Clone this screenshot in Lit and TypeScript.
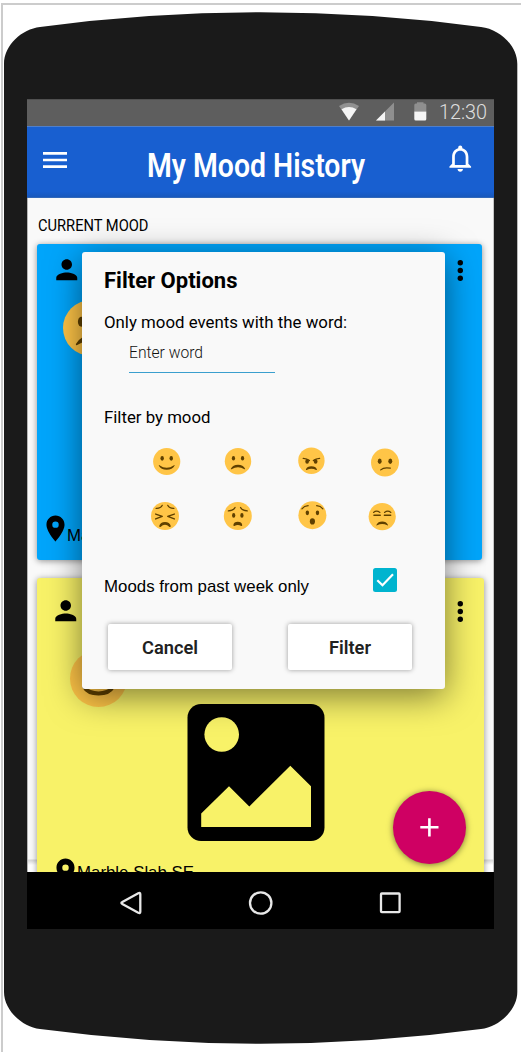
import { LitElement, html, svg, css } from "lit";
import { customElement, state } from "lit/decorators.js";

// Single line of text whose box ends on the baseline.
const label = (text: string, width: number, cls: string) => html`
  <svg class="label ${cls}" width=${width} height="20">
    <text x="0" y="20" textLength=${width} lengthAdjust="spacingAndGlyphs">${text}</text>
  </svg>`;

const person = html`<svg class="person" viewBox="0 0 24 24"><path d="M12 12c2.21 0 4-1.79 4-4s-1.79-4-4-4-4 1.79-4 4 1.79 4 4 4zm0 2c-2.67 0-8 1.34-8 4v2h16v-2c0-2.66-5.33-4-8-4z"/></svg>`;
const more = html`<svg class="more" width="6" height="22"><circle cx="3.3" cy="2.7" r="2.7"/><circle cx="3.3" cy="10.5" r="2.7"/><circle cx="3.3" cy="18.3" r="2.7"/></svg>`;
const pin = html`<svg class="pin" viewBox="0 0 24 24"><path d="M12 2C8.13 2 5 5.13 5 9c0 5.25 7 13 7 13s7-7.75 7-13c0-3.87-3.13-7-7-7zm0 9.500a2.500 2.500 0 1 1 0-5 2.500 2.500 0 0 1 0 5z"/></svg>`;

const line = (d: string, w = 1.9) =>
  svg`<path d=${d} fill="none" stroke="#5f4000" stroke-width=${w} stroke-linecap="round" stroke-linejoin="round"/>`;
const fill = (d: string) => svg`<path d=${d} fill="#5f4000"/>`;
const eyes = (lx: number, rx: number, y: number, w = 2.3, h = 3.1) =>
  svg`<ellipse cx=${lx} cy=${y} rx=${w} ry=${h} fill="#5f4000"/><ellipse cx=${rx} cy=${y} rx=${w} ry=${h} fill="#5f4000"/>`;

const faces: Record<string, unknown> = {
  smile: svg`${eyes(12, 24, 13.8)}${fill("M8.300 22.800q9.700 6.800 19.400 0q1-.3.700.7Q25.500 28.800 18 28.800T7.600 23.500q-.3-1 .7-.7z")}`,
  frown: svg`${eyes(11.800, 24.200, 14, 2.2, 3.2)}${fill("M8.300 28.300Q11 23 18 23t9.700 5.300q.2 1-.8.700Q18 23.500 9.100 29q-1 .3-.8-.7z")}`,
  angry: svg`${eyes(12.200, 23.800, 19, 2.5, 3.2)}${line("M6.800 14.800Q12 15 15.300 17.800", 1.8)}${line("M29.200 14.800Q24 15 20.700 17.800", 1.8)}${fill("M10.500 30Q12 25.600 18 25.600T25.500 30q0 1-1 .6Q18 27.200 11.500 30.600q-1 .4-1-.6z")}`,
  confused: svg`${eyes(11.200, 24.800, 16.300, 2.5, 3.5)}${line("M12.500 27.300Q16.500 23.600 24.800 25.200", 1.6)}`,
  persevere: svg`${line("M6.500 8.200Q12.500 8.500 14.500 4.300", 1.6)}${line("M29.500 8.200Q23.500 8.500 21.500 4.300", 1.6)}${line("M6 15.500L14.500 18.500L6 21.800M30 15.500L21.500 18.500L30 21.800", 1.8)}${fill("M10.600 31Q12 25.600 18 25.600T25.400 31q0 1.500-1.600 1-3-2.800-5.800-2.800T12.200 32q-1.600.5-1.600-1z")}`,
  worried: svg`${eyes(12.700, 23.300, 17.300, 2.1, 3)}${line("M5.800 11.500Q12.500 11 14.500 7", 1.6)}${line("M30.200 11.500Q23.500 11 21.500 7", 1.6)}${fill("M12.300 29.500Q13 25.500 18 25.500T23.700 29.500q.1 1.500-1.300 1.200Q18 28.300 13.600 30.700q-1.400.3-1.300-1.200z")}`,
  hushed: svg`${eyes(11.500, 24.500, 15, 2.2, 3.1)}${line("M4.500 9.800Q7.500 6.200 12.500 5.800", 1.6)}${line("M31.500 9.800Q28.500 6.200 23.500 5.800", 1.6)}<ellipse cx="18" cy="26" rx="3.3" ry="4" fill="#5f4000"/>`,
  unamused: svg`${line("M6.500 12.500Q10.500 9.200 15 12.500M21 12.500Q25.500 9.200 29.500 12.500", 1.5)}${line("M7 16.200H15.500M20.800 16.200H29.300", 1.7)}${fill("M11.600 16h4a2.300 2.300 0 0 1-4.200 0zM25.400 16h4a2.300 2.300 0 0 1-4.200 0z")}${fill("M10.300 29Q12.500 24.500 18 24.500T25.700 29q.1 1-1 .6Q18 26 11.300 29.600q-1.100.4-1-.6z")}`,
};

const face = (name: string) => svg`<circle cx="18" cy="18" r="18" fill="#ffc547"/>${faces[name]}`;

@customElement("app-root")
export class AppRoot extends LitElement {
  @state() private pastWeek = true;

  private moods = [
    { name: "smile", x: 36.7, y: 26.5, r: 13.6 },
    { name: "frown", x: 35, y: 26.2, r: 13.2 },
    { name: "angry", x: 35.400, y: 25.7, r: 13.2 },
    { name: "confused", x: 36, y: 27.6, r: 14 },
    { name: "persevere", x: 35, y: 27, r: 14 },
    { name: "worried", x: 34.800, y: 27, r: 14 },
    { name: "hushed", x: 36.400, y: 26.200, r: 14 },
    { name: "unamused", x: 33.200, y: 27.6, r: 13.6 },
  ];

  static styles = css`
    :host {
      display: block;
      position: relative;
      box-sizing: border-box;
      width: 521px;
      height: 1052px;
      overflow: hidden;
      background: #fff;
      font-family: Roboto, sans-serif;
    }
    svg { display: block; flex: none; overflow: visible; }
    .device { position: absolute; left: 0; top: 0; }
    .screen {
      position: relative;
      display: flex;
      flex-direction: column;
      width: 467px;
      height: 830px;
      margin: 99px 0 0 27px;
      overflow: hidden;
      background: #fff;
    }
    .status {
      box-sizing: border-box;
      display: flex;
      flex: none;
      height: 27px;
      padding: 3px 0 0 312px;
      background: #5e5e5e;
      border-top: 1px solid #505050;
    }
    .status .label { margin-top: -4px; margin-left: -1px; }
    .bar {
      box-sizing: border-box;
      display: flex;
      flex: none;
      height: 72px;
      padding-left: 16px;
      border-top: 1px solid #4f7fca;
      border-bottom: 1px solid #3168ba;
      background: linear-gradient(#185fd0 92%, #1858bd);
    }
    .menu { margin-top: 25px; }
    .bar .label { margin: 30px 0 0 80px; }
    .bell { width: 32.5px; height: 32.5px; margin: 15.400px 0 0 79px; fill: #fff; }
    .content {
      display: flex;
      flex-direction: column;
      flex: none;
      height: 674px;
      overflow: hidden;
      background: linear-gradient(#f9f9f9 0 661px, #d6d6d6 662px, #fff 667px);
      border-left: 1px solid #b5b5b5;
      border-right: 1px solid #c5c5c5;
      box-sizing: border-box;
    }
    .heading { margin: 13px 0 13px 9.500px; }
    .card {
      box-sizing: border-box;
      flex: none;
      margin-left: 9px;
      border-radius: 3px;
      box-shadow: 0 1px 6px rgba(0, 0, 0, 0.42);
      display: flex;
      flex-direction: column;
    }
    .blue { width: 445.400px; height: 316px; background: #00a5fb; }
    .yellow { width: 447px; height: 330px; margin-top: 17.500px; background: #f8f268; }
    .top { display: flex; justify-content: space-between; }
    .person { width: 31.5px; height: 31.5px; }
    .blue .top { padding: 10.200px 19.400px 0 13.500px; }
    .blue .more { margin-top: 5.600px; }
    .yellow .top { padding: 17.500px 21px 0 12.500px; }
    .yellow .more { margin-top: 6px; }
    .place { display: flex; }
    .pin { width: 31px; height: 31px; }
    .blue .face { margin: 14.800px 0 0 26px; }
    .blue .place { margin: 156.200px 0 0 2.500px; }
    .place .label { margin: 8px 0 0 -3.500px; }
    .yellow .face { margin: 23.500px 0 0 33px; }
    .photo { margin: -3.500px 0 0 150px; }
    .yellow .place { margin: 15.400px 0 0 12.500px; }
    .yellow .place .label { margin-top: 2.200px; }
    .nav {
      display: flex;
      flex: none;
      height: 57px;
      background: #000;
    }
    .label { font-family: Roboto, sans-serif; font-size: 17px; fill: #000; }
    .arial { font-family: "Liberation Sans", Arial, sans-serif; font-size: 17px; }
    .time { font-size: 20px; font-weight: 300; fill: #dedede; }
    .title { font-size: 33.500px; font-weight: 600; fill: #fff; }
    .section { font-size: 17.300px; }
    .h { font-size: 22px; font-weight: 700; }
    .hint { font-size: 16px; font-weight: 300; fill: #111; }
    .action { font-size: 18.500px; font-weight: 600; fill: #212121; }
    .fab {
      position: absolute;
      left: 365.700px;
      top: 691.800px;
      width: 73px;
      height: 73px;
      padding: 0;
      border: 0;
      border-radius: 50%;
      background: #cf0063;
      box-shadow: 0 1px 6px rgba(0, 0, 0, 0.5);
    }
    .dialog {
      position: absolute;
      left: 55px;
      top: 153px;
      box-sizing: border-box;
      display: flex;
      flex-direction: column;
      width: 363px;
      height: 436.700px;
      padding: 15.700px 0 0 22px;
      border-radius: 3px;
      background: #f9f9f9;
      box-shadow: 0 7px 34px rgba(0, 0, 0, 0.5);
    }
    .q { margin-top: 20.300px; }
    .field {
      width: 146.500px;
      margin: 10px 0 0 24.500px;
      padding-bottom: 14px;
      border-bottom: 1px solid #3a9fce;
    }
    .by { margin-top: 29.700px; }
    .moods {
      display: grid;
      grid-template-columns: repeat(4, 73px);
      margin: 12.300px 0 0 26px;
    }
    .week { display: flex; align-items: flex-end; gap: 64px; margin-top: 25px; }
    .buttons { display: flex; gap: 56px; margin: 32px 0 0 4px; }
    button { font: inherit; }
    .btn {
      display: flex;
      box-sizing: border-box;
      justify-content: center;
      width: 124px;
      height: 46.500px;
      padding: 10px 0 0;
      border: 0;
      border-radius: 2px;
      background: #fff;
      box-shadow: 0 0 5px rgba(0, 0, 0, 0.38);
    }
  `;

  render() {
    return html`
      <svg class="device" width="521" height="1052">
        <path d="M2 1052V4H521" fill="none" stroke="#ccc" stroke-width="2"/>
        <path d="M4 64C4 45 22 29 40 27Q150 12.300 260.500 12.300T481 27C499 29 517.300 45 517.300 64V992C517.300 1010 499 1027 481 1029Q371 1043.700 260.500 1043.700T40 1029C22 1027 4 1010 4 992Z" fill="#1a1a1a"/>
      </svg>
      <div class="screen">
        <div class="status">
          <svg width="101" height="20">
            <path d="M0 3Q10-3.500 20 3L10 17.500Z" fill="#919191"/>
            <path d="M2.500 6.200Q10 1.800 17.500 6.200L10 17.500Z" fill="#f5f5f5"/>
            <path d="M37 17.500L55-.5V17.500Z" fill="#8f8f8f"/>
            <path d="M37 17.500L46 8.500V17.500Z" fill="#f5f5f5"/>
            <path d="M75.300 8.500V2q0-1.500 1.500-1.500H78V-.7h6.500V.5h1.300q1.500 0 1.500 1.500V8.500Z" fill="#8f8f8f"/>
            <path d="M75.300 8.500h12v7.500q0 1.500-1.500 1.500h-9q-1.500 0-1.500-1.500Z" fill="#f5f5f5"/>
          </svg>
          ${label("12:30", 48, "time")}
        </div>
        <div class="bar">
          <svg class="menu" width="24" height="16"><path d="M0 1.400H24M0 8H24M0 14.600H24" stroke="#fff" stroke-width="2.600"/></svg>
          ${label("My Mood History", 218, "title")}
          <svg class="bell" viewBox="0 0 24 24"><path d="M12 22c1.100 0 2-.9 2-2h-4c0 1.100.9 2 2 2zm6-6v-5c0-3.070-1.630-5.640-4.500-6.320V4c0-.830-.670-1.500-1.500-1.500s-1.500.670-1.500 1.500v.680C7.640 5.360 6 7.920 6 11v5l-2 2v1h16v-1l-2-2zm-2 1H8v-6c0-2.480 1.510-4.500 4-4.500s4 2.020 4 4.500v6z"/></svg>
        </div>
        <div class="content">
          <div class="heading">${label("CURRENT MOOD", 110.5, "section")}</div>
          <div class="card blue">
            <div class="top">${person}${more}</div>
            <svg class="face" width="56" height="56" viewBox="0 0 36 36">${face("frown")}</svg>
            <div class="place">${pin}${label("Marble Slab SE", 117, "arial")}</div>
          </div>
          <div class="card yellow">
            <div class="top">${person}${more}</div>
            <svg class="face" width="57" height="57" viewBox="0 0 36 36">${face("smile")}</svg>
            <svg class="photo" width="137" height="137">
              <rect x="0.500" width="137" height="137" rx="13.500"/>
              <g fill="#f8f268"><circle cx="34.700" cy="30.500" r="17.300"/><path d="M14.200 123V109.500L42 82.300L62.300 102.500L103.300 61.800L124 82.200V123Z"/></g>
            </svg>
            <div class="place">${pin}${label("Marble Slab SE", 117, "arial")}</div>
          </div>
        </div>
        <div class="nav">
          <svg width="467" height="57" fill="none" stroke="#e8e8e8" stroke-width="2.300" stroke-linejoin="round">
            <path d="M111.300 21.300Q113.300 20.300 113.300 22.300V39.700Q113.300 41.700 111.300 40.700L95.300 31.900Q93.500 31 95.300 30.100Z"/>
            <circle cx="233.700" cy="31" r="10.700"/>
            <rect x="354" y="21.500" width="18.600" height="18.600" rx="0.800"/>
          </svg>
        </div>
        <button class="fab" aria-label="Add">
          <svg width="73" height="73"><path d="M27.300 36.300H45.500M36.400 27.200V45.400" stroke="#fff" stroke-width="2.600"/></svg>
        </button>
        <div class="dialog" role="dialog">
          ${label("Filter Options", 133.5, "h")}
          <div class="q">${label("Only mood events with the word:", 243, "")}</div>
          <div class="field">${label("Enter word", 74, "hint")}</div>
          <div class="by">${label("Filter by mood", 106.5, "")}</div>
          <div class="moods">
            ${this.moods.map(
              (m) => html`<svg width="73" height="54"><g transform="translate(${m.x - m.r} ${m.y - m.r}) scale(${m.r / 18})">${face(m.name)}</g></svg>`
            )}
          </div>
          <div class="week">
            ${label("Moods from past week only", 205, "arial")}
            <svg width="24" height="24" @click=${() => (this.pastWeek = !this.pastWeek)}>
              <rect width="24" height="24" rx="2.500" fill="#00b4cf"/>
              ${this.pastWeek ? svg`<path d="M4.300 12.300L9.500 17.300L20 6.300" fill="none" stroke="#fff" stroke-width="2.200"/>` : ""}
            </svg>
          </div>
          <div class="buttons">
            <button class="btn">${label("Cancel", 56, "action")}</button>
            <button class="btn">${label("Filter", 42, "action")}</button>
          </div>
        </div>
      </div>
    `;
  }
}
